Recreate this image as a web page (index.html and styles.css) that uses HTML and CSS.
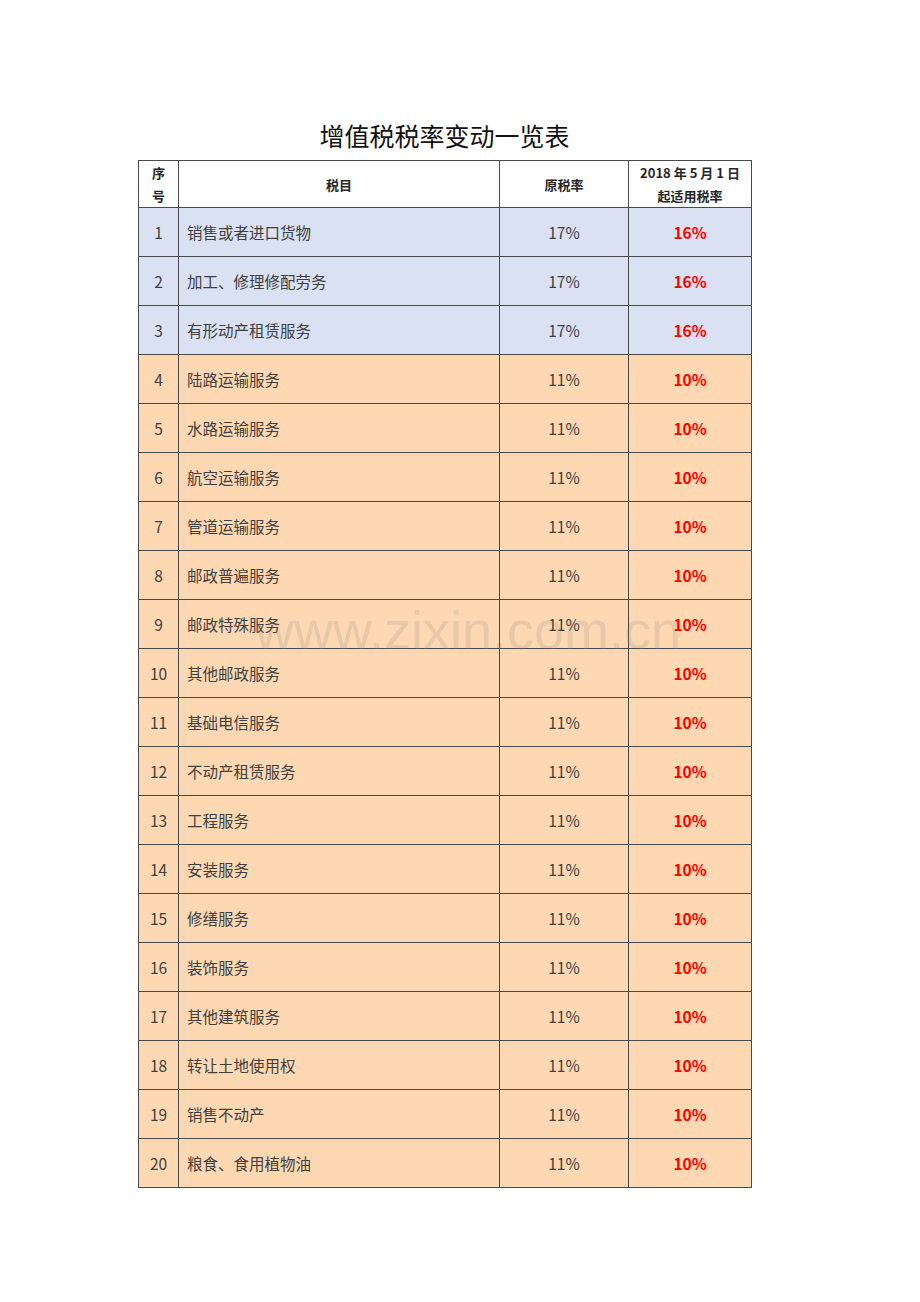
FILE: index.html
```html
<!DOCTYPE html>
<html lang="zh-CN">
<head>
<meta charset="utf-8">
<title>增值税税率变动一览表</title>
<link rel="stylesheet" href="styles.css">
</head>
<body>
<div class="page">
  <h1 class="title">增值税税率变动一览表</h1>
  <table class="rates">
    <colgroup>
      <col class="c-no"><col class="c-name"><col class="c-old"><col class="c-new">
    </colgroup>
    <thead>
      <tr class="head">
        <th>序<br>号</th>
        <th>税目</th>
        <th>原税率</th>
        <th>2018 年 5 月 1 日<br>起适用税率</th>
      </tr>
    </thead>
    <tbody>
      <tr class="blue"><td class="no">1</td><td class="name">销售或者进口货物</td><td class="old">17%</td><td class="new">16%</td></tr>
      <tr class="blue"><td class="no">2</td><td class="name">加工、修理修配劳务</td><td class="old">17%</td><td class="new">16%</td></tr>
      <tr class="blue"><td class="no">3</td><td class="name">有形动产租赁服务</td><td class="old">17%</td><td class="new">16%</td></tr>
      <tr class="orange"><td class="no">4</td><td class="name">陆路运输服务</td><td class="old">11%</td><td class="new">10%</td></tr>
      <tr class="orange"><td class="no">5</td><td class="name">水路运输服务</td><td class="old">11%</td><td class="new">10%</td></tr>
      <tr class="orange"><td class="no">6</td><td class="name">航空运输服务</td><td class="old">11%</td><td class="new">10%</td></tr>
      <tr class="orange"><td class="no">7</td><td class="name">管道运输服务</td><td class="old">11%</td><td class="new">10%</td></tr>
      <tr class="orange"><td class="no">8</td><td class="name">邮政普遍服务</td><td class="old">11%</td><td class="new">10%</td></tr>
      <tr class="orange"><td class="no">9</td><td class="name">邮政特殊服务</td><td class="old">11%</td><td class="new">10%</td></tr>
      <tr class="orange"><td class="no">10</td><td class="name">其他邮政服务</td><td class="old">11%</td><td class="new">10%</td></tr>
      <tr class="orange"><td class="no">11</td><td class="name">基础电信服务</td><td class="old">11%</td><td class="new">10%</td></tr>
      <tr class="orange"><td class="no">12</td><td class="name">不动产租赁服务</td><td class="old">11%</td><td class="new">10%</td></tr>
      <tr class="orange"><td class="no">13</td><td class="name">工程服务</td><td class="old">11%</td><td class="new">10%</td></tr>
      <tr class="orange"><td class="no">14</td><td class="name">安装服务</td><td class="old">11%</td><td class="new">10%</td></tr>
      <tr class="orange"><td class="no">15</td><td class="name">修缮服务</td><td class="old">11%</td><td class="new">10%</td></tr>
      <tr class="orange"><td class="no">16</td><td class="name">装饰服务</td><td class="old">11%</td><td class="new">10%</td></tr>
      <tr class="orange"><td class="no">17</td><td class="name">其他建筑服务</td><td class="old">11%</td><td class="new">10%</td></tr>
      <tr class="orange"><td class="no">18</td><td class="name">转让土地使用权</td><td class="old">11%</td><td class="new">10%</td></tr>
      <tr class="orange"><td class="no">19</td><td class="name">销售不动产</td><td class="old">11%</td><td class="new">10%</td></tr>
      <tr class="orange"><td class="no">20</td><td class="name">粮食、食用植物油</td><td class="old">11%</td><td class="new">10%</td></tr>
    </tbody>
  </table>
  <div class="watermark">www.zixin.com.cn</div>
</div>
</body>
</html>
```
FILE: styles.css
```css
html, body {
  margin: 0;
  padding: 0;
  background: #ffffff;
}

.page {
  position: relative;
  width: 920px;
  height: 1302px;
  padding-top: 115px;
  box-sizing: border-box;
  font-family: "Noto Sans CJK SC", "Noto Sans", sans-serif;
  color: #404040;
}

.title {
  margin: 0 0 0 138px;
  width: 613px;
  text-align: center;
  font-size: 25px;
  font-weight: 400;
  line-height: 40px;
  height: 45px;
  color: #111111;
}

.rates {
  margin-left: 138px;
  width: 613px;
  border-collapse: collapse;
  table-layout: fixed;
  font-size: 15.5px;
}

.c-no { width: 40px; }
.c-name { width: 321px; }
.c-old { width: 129px; }
.c-new { width: 123px; }

.rates th,
.rates td {
  border: 1px solid #4a4a4a;
  padding: 0;
}

.head th {
  height: 46px;
  font-size: 13px;
  font-weight: 700;
  line-height: 23px;
  color: #262626;
  text-align: center;
  background: #ffffff;
}

.rates tbody tr {
  height: 49px;
}

.rates tbody td {
  height: 48px;
  line-height: 20px;
}

.blue td { background: #d9e1f2; }
.orange td { background: #fdd8b3; }

.no { text-align: center; }
.name { text-align: left; padding-left: 8px !important; }
.old { text-align: center; }
.new {
  text-align: center;
  color: #ff0000;
  font-weight: 700;
}

.watermark {
  position: absolute;
  left: 0;
  width: 920px;
  top: 598px;
  text-align: center;
  font-family: "Liberation Sans", Arial, sans-serif;
  font-size: 54px;
  line-height: 64px;
  color: rgba(120, 120, 120, 0.16);
  pointer-events: none;
  padding-left: 16px;
  box-sizing: border-box;
}
```
